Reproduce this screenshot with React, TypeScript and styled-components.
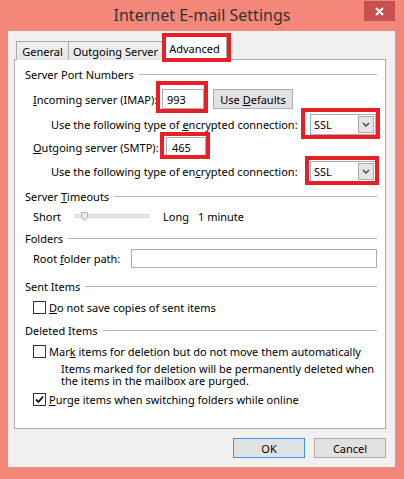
import React from 'react';
import styled, { createGlobalStyle, css } from 'styled-components';

const Global = createGlobalStyle`
  html, body { margin: 0; padding: 0; }
  body {
    font-family: "Noto Sans", "DejaVu Sans", sans-serif;
    font-size: 11px;
    line-height: 15px;
    color: #000;
    background: #F3877A;
  }
  * { box-sizing: border-box; }
`;

const Window = styled.div`
  width: 404px;
  height: 479px;
  background: #F3877A;
  display: flex;
  flex-direction: column;
  overflow: hidden;
`;

const TitleBar = styled.div`
  height: 31px;
  display: grid;
  grid-template-columns: 31px 1fr 31px;
  padding: 0 9px;
  align-items: start;
`;

const Title = styled.div`
  grid-column: 2;
  text-align: center;
  font-size: 16px;
  line-height: 31px;
  color: #333;
`;

const CloseButton = styled.div`
  grid-column: 3;
  height: 20px;
  margin-top: 1px;
  background: #C75050;
  display: flex;
  align-items: center;
  justify-content: center;
`;

const Body = styled.div`
  flex: 1;
  margin: 0 9px 12px 8px;
  background: #F0F0F0;
  display: flex;
  flex-direction: column;
  padding: 5px 9px 9px 6px;
`;

const TabBar = styled.div`
  display: flex;
  align-items: flex-end;
  height: 24px;
  padding-left: 2px;
  margin-bottom: -1px;
  position: relative;
  z-index: 1;
`;

const Tab = styled.div<{ $w: number; $active?: boolean; $ml?: number }>`
  width: ${p => p.$w}px;
  margin-left: ${p => p.$ml ?? 0}px;
  border: 1px solid #ACACAC;
  border-bottom: none;
  display: flex;
  align-items: center;
  justify-content: center;
  white-space: nowrap;
  ${p => p.$active
    ? css`height: 24px; background: #fff; position: relative; z-index: 1; padding-bottom: 1px;`
    : css`height: 19px; background: linear-gradient(#F0F0F0, #E5E5E5);`}
`;

const Mark = styled.div<{ $t: number; $r: number; $b: number; $l: number }>`
  position: relative;
  display: flex;
  align-items: flex-end;
  &::after {
    content: '';
    position: absolute;
    top: ${p => p.$t}px;
    right: ${p => p.$r}px;
    bottom: ${p => p.$b}px;
    left: ${p => p.$l}px;
    border: 4px solid #E81F27;
    pointer-events: none;
    z-index: 2;
  }
`;

const Panel = styled.div`
  height: 370px;
  border: 1px solid #ACACAC;
  background: #fff;
  padding: 4px 8px 0 10px;
  display: flex;
  flex-direction: column;
`;

const Heading = styled.div<{ $mt?: number }>`
  height: 20px;
  margin-top: ${p => p.$mt ?? 0}px;
  display: flex;
  align-items: center;
  white-space: nowrap;
  &::after {
    content: '';
    flex: 1;
    border-top: 1px solid #B4B4B4;
    margin-left: 5px;
    margin-top: 1px;
  }
`;

const Row = styled.div<{ $mt?: number; $indent: number }>`
  height: 20px;
  margin-top: ${p => p.$mt ?? 0}px;
  padding-left: ${p => p.$indent}px;
  display: flex;
  align-items: center;
  white-space: nowrap;
`;

const Label = styled.span<{ $w?: number }>`
  ${p => p.$w !== undefined && css`width: ${p.$w}px; flex: none;`}
  white-space: nowrap;
`;

const U = styled.span`
  text-decoration: underline;
`;

const TextBox = styled.div<{ $w: number; $h?: number; $pl?: number }>`
  width: ${p => p.$w}px;
  height: ${p => p.$h ?? 20}px;
  border: 1px solid #ABADB3;
  background: #fff;
  padding-left: ${p => p.$pl ?? 4}px;
  display: flex;
  align-items: center;
`;

const PushButton = styled.div<{ $w: number; $default?: boolean; $ml?: number }>`
  width: ${p => p.$w}px;
  height: 20px;
  margin-left: ${p => p.$ml ?? 0}px;
  background: #E1E1E1;
  border: 1px solid ${p => (p.$default ? '#3399FF' : '#ADADAD')};
  display: flex;
  align-items: center;
  justify-content: center;
  white-space: nowrap;
`;

const Select = styled.div`
  width: 66px;
  height: 21px;
  border: 1px solid #ABADB3;
  border-left-color: #7EB4EA;
  background: #fff;
  display: flex;
  align-items: center;
  padding: 1px;
`;

const SelectText = styled.span`
  flex: 1;
  padding-left: 2px;
`;

const DropButton = styled.div`
  width: 16px;
  height: 17px;
  background: #E5E5E5;
  border: 1px solid #ACACAC;
  display: flex;
  align-items: center;
  justify-content: center;
`;

const Track = styled.div`
  width: 74px;
  height: 4px;
  background: #E7EAEA;
  border: 1px solid #D6D6D6;
  position: relative;
  margin-right: 14px;
`;

const Thumb = styled.svg`
  position: absolute;
  left: 5px;
  top: -3px;
`;

const CheckBox = styled.div`
  width: 13px;
  height: 13px;
  border: 1px solid #333;
  background: #fff;
  margin-right: 3px;
  display: flex;
  align-items: center;
  justify-content: center;
  flex: none;
`;

const Note = styled.div`
  margin-top: 2px;
  padding-left: 36px;
  line-height: 12px;
  height: 24px;
  white-space: nowrap;
`;

const ButtonRow = styled.div`
  display: flex;
  justify-content: flex-end;
  gap: 9px;
  margin-top: 9px;
`;

const Chevron = () => (
  <svg width="8" height="5" viewBox="0 0 8 5">
    <path d="M1 1 L4 4 L7 1" stroke="#4D4D4D" strokeWidth="1.5" fill="none" />
  </svg>
);

const DropDown = () => (
  <Select>
    <SelectText>SSL</SelectText>
    <DropButton><Chevron /></DropButton>
  </Select>
);

const Check = () => (
  <svg width="9" height="9" viewBox="0 0 9 9">
    <path d="M1 4.5 L3.5 7 L8 1.5" stroke="#111" strokeWidth="1.8" fill="none" />
  </svg>
);

export default function App() {
  return (
    <>
      <Global />
      <Window>
        <TitleBar>
          <Title>Internet E-mail Settings</Title>
          <CloseButton>
            <svg width="9" height="9" viewBox="0 0 9 9">
              <path d="M1 1 L8 8 M8 1 L1 8" stroke="#fff" strokeWidth="2" />
            </svg>
          </CloseButton>
        </TitleBar>
        <Body>
          <TabBar>
            <Tab $w={53}>General</Tab>
            <Tab $w={95} $ml={-1}>Outgoing Server</Tab>
            <Mark $t={-3} $r={-4} $b={-2} $l={-1}>
              <Tab $w={65} $ml={-1} $active>Advanced</Tab>
            </Mark>
          </TabBar>
          <Panel>
            <Heading><span>Server Port Numbers</span></Heading>
            <Row $indent={8} $mt={5}>
              <Label $w={129}><U>I</U>ncoming server (IMAP):</Label>
              <Mark $t={-8} $r={-4} $b={-4} $l={-6}>
                <TextBox $w={42}>993</TextBox>
              </Mark>
              <PushButton $w={80} $ml={9}><span>Use <U>D</U>efaults</span></PushButton>
            </Row>
            <Row $indent={26} $mt={5}>
              <Label $w={259}>Use the following type of <U>e</U>ncrypted connection:</Label>
              <Mark $t={-6} $r={-4} $b={-4} $l={-9}>
                <DropDown />
              </Mark>
            </Row>
            <Row $indent={8} $mt={3}>
              <Label $w={133}><U>O</U>utgoing server (SMTP):</Label>
              <Mark $t={-5} $r={-4} $b={-2} $l={-6}>
                <TextBox $w={40} $pl={5}>465</TextBox>
              </Mark>
            </Row>
            <Row $indent={26} $mt={4}>
              <Label $w={259}>Use the following type of en<U>c</U>rypted connection:</Label>
              <Mark $t={-5} $r={-3} $b={-3} $l={-5}>
                <DropDown />
              </Mark>
            </Row>
            <Heading $mt={5}><span>Server <U>T</U>imeouts</span></Heading>
            <Row $indent={8}>
              <Label $w={42}>Short</Label>
              <Track>
                <Thumb width="7" height="9" viewBox="0 0 7 9">
                  <path d="M0.5 0.5 H6.5 V5.5 L3.5 8.5 L0.5 5.5 Z" fill="#E7EAEA" stroke="#B5B5B5" />
                </Thumb>
              </Track>
              <Label $w={35}>Long</Label>
              <Label>1 minute</Label>
            </Row>
            <Heading $mt={2}><span>Folders</span></Heading>
            <Row $indent={8}>
              <Label $w={98}>Root <U>f</U>older path:</Label>
              <TextBox $w={247} $h={19} />
            </Row>
            <Heading $mt={8}><span>Sent Items</span></Heading>
            <Row $indent={8} $mt={1}>
              <CheckBox />
              <Label><U>D</U>o not save copies of sent items</Label>
            </Row>
            <Heading $mt={3}><span>Deleted Items</span></Heading>
            <Row $indent={8} $mt={1}>
              <CheckBox />
              <Label>Mar<U>k</U> items for deletion but do not move them automatically</Label>
            </Row>
            <Note>
              Items marked for deletion will be permanently deleted when<br />
              the items in the mailbox are purged.
            </Note>
            <Row $indent={8} $mt={2}>
              <CheckBox><Check /></CheckBox>
              <Label><U>P</U>urge items when switching folders while online</Label>
            </Row>
          </Panel>
          <ButtonRow>
            <PushButton $w={72} $default>OK</PushButton>
            <PushButton $w={72}>Cancel</PushButton>
          </ButtonRow>
        </Body>
      </Window>
    </>
  );
}
